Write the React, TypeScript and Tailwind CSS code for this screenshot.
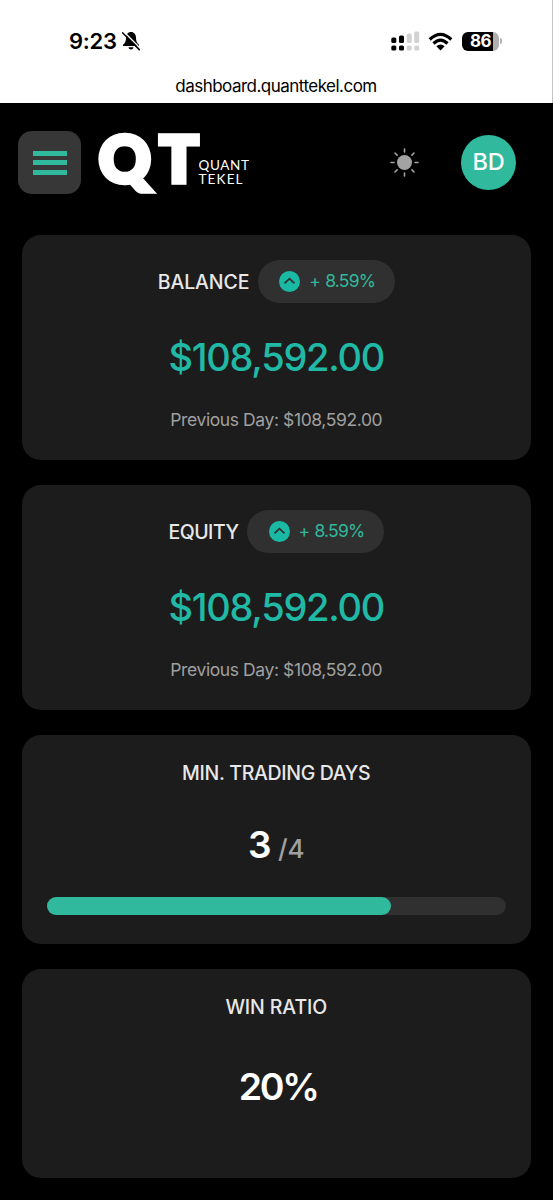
import type { ReactNode } from "react";

function StatusBar() {
  return (
    <div className="h-[103px] border-r border-[#c4c4c4] bg-white text-black">
      <div className="flex h-[74px] items-start justify-between pl-[69px] pr-[50px] pt-[25px]">
        <div className="flex h-8 items-center gap-[4px]">
          <span className="w-[49px] whitespace-nowrap text-[22px] font-semibold leading-8 tracking-[-0.250px]">9:23</span>
          <svg width="18" height="20" viewBox="0 0 18 20">
            <path d="M9 1C5.8 1 4 3.500 4 6.500c0 4-1 5.300-3 7.300V15h16v-1.200c-2-2-3-3.300-3-7.300C14 3.500 12.200 1 9 1ZM6.500 16.300h5c-.3 1.500-1.200 2.200-2.500 2.200s-2.200-.7-2.500-2.200Z" fill="#000" />
            <path d="M1.500.5 18 17" stroke="#fff" strokeWidth="1.500" />
            <path d="M.5 1.800 17.300 18.600" stroke="#000" strokeWidth="1.500" strokeLinecap="round" />
          </svg>
        </div>
        <div className="flex h-8 items-center">
          <svg width="29" height="20" viewBox="0 0 29 20">
            <g fill="#000">
              <rect x="0.300" y="6.500" width="5" height="5.500" rx="1.500" />
              <rect x="8" y="4.500" width="5" height="7.500" rx="1.500" />
              <rect x="0.300" y="14.500" width="5" height="5" rx="1.500" />
              <rect x="8" y="14.500" width="5" height="5" rx="1.500" />
            </g>
            <g fill="#d2d2d2">
              <rect x="15.700" y="2.500" width="5" height="9.500" rx="1.500" />
              <rect x="23.200" y="0.500" width="5" height="11.500" rx="1.500" />
              <rect x="15.700" y="14.500" width="5" height="5" rx="1.500" />
              <rect x="23.200" y="14.500" width="5" height="5" rx="1.500" />
            </g>
          </svg>
          <svg className="ml-2" width="25" height="19" viewBox="0 0 25 19">
            <g fill="none" stroke="#000" strokeWidth="3.200">
              <path d="M1.700 7.500Q12.500-2.800 23.300 7.500" />
              <path d="M5.500 11.500Q12.500 4.800 19.500 11.500" />
            </g>
            <path d="M12.500 18.500 8.300 14.200Q12.500 10.800 16.700 14.200Z" fill="#000" />
          </svg>
          <div className="ml-[9px] flex items-center">
            <div className="flex h-[19px] w-[37px] items-center justify-center overflow-hidden rounded-[6px] bg-[linear-gradient(90deg,#000_31px,#b0b0b0_31px)] text-[17px] font-bold leading-[19px] tracking-[-0.5px] text-white">86</div>
            <div className="ml-px h-[6px] w-[2px] rounded-r-full bg-[#b0b0b0]" />
          </div>
        </div>
      </div>
      <div className="text-center text-[17px] leading-6 tracking-[-0.520px]">dashboard.quanttekel.com</div>
    </div>
  );
}

function Header() {
  return (
    <header className="flex h-[132px] items-start pl-[18px] pr-[37px] pt-[28px]">
      <button aria-label="Menu" className="flex size-[63px] flex-col items-center justify-center gap-[4.500px] rounded-[14px] bg-[#373737]">
        <span className="h-[5px] w-[34px] bg-[#30b99c]" />
        <span className="h-[5px] w-[34px] bg-[#30b99c]" />
        <span className="h-[5px] w-[34px] bg-[#30b99c]" />
      </button>
      <svg className="-mt-5 ml-[13px]" width="165" height="100" viewBox="-2 -20 165 100" fill="#fff">
        <text x="3" y="50.800" fontFamily="Lato" fontWeight="900" fontSize="63.500" textLength="99" stroke="#fff" strokeWidth="5.500">QT</text>
        <g fontFamily="Lato" fontSize="13.500">
          <text x="102.500" y="39" textLength="50.500">QUANT</text>
          <text x="102.500" y="53.300" textLength="44">TEKEL</text>
        </g>
      </svg>
      <div className="ml-auto flex items-center pt-[3.500px]">
        <svg className="mr-[42px]" width="29" height="29" viewBox="-14.500 -14.500 29 29">
          <circle r="7.500" fill="#a3a3a3" />
          <path d="M0-10.500V-13.500M0 10.500V13.500M-10.500 0H-13.500M10.500 0H13.500M-7.400-7.400-9.500-9.500M7.400 7.400 9.500 9.500M-7.400 7.400-9.500 9.500M7.400-7.400 9.500-9.500" stroke="#a3a3a3" strokeWidth="1.600" strokeLinecap="round" />
        </svg>
        <div className="flex size-[55px] items-center justify-center rounded-full bg-[#30b99c] text-[23.500px] font-medium leading-none tracking-[-0.3px] text-white">BD</div>
      </div>
    </header>
  );
}

function Card({ children, className }: { children: ReactNode; className: string }) {
  return <section className={`flex flex-col items-center rounded-[19px] bg-[#1c1c1c] px-[25px] pt-[25px] ${className}`}>{children}</section>;
}

function Title({ children, className }: { children: ReactNode; className: string }) {
  return <h2 className={`whitespace-nowrap text-[19.500px] font-medium leading-[26px] text-[#e8e8e8] ${className}`}>{children}</h2>;
}

function MoneyCard({ title, titleClass }: { title: string; titleClass: string }) {
  return (
    <Card className="h-[225px]">
      <div className="flex items-center gap-[8.500px]">
        <Title className={titleClass}>{title}</Title>
        <div className="flex h-[43px] w-[137px] items-center rounded-full bg-[#303030] pl-[21.500px]">
          <svg width="21" height="21" viewBox="0 0 21 21">
            <circle cx="10.500" cy="10.500" r="10.500" fill="#1ab9a4" />
            <path d="m5.500 12.300 5-4.600 5 4.600" fill="none" stroke="#303030" strokeWidth="1.800" />
          </svg>
          <span className="-mt-px ml-[9px] whitespace-nowrap text-[17.500px] leading-6 tracking-[-0.8px] [word-spacing:1px] text-[#30b99c]">+ 8.59%</span>
        </div>
      </div>
      <div className="mt-[29px] whitespace-nowrap text-[38px] font-medium leading-[50px] tracking-[-1.25px] text-[#20b9a6]">$108,592.00</div>
      <div className="mt-[25px] whitespace-nowrap text-[17.500px] leading-[26px] tracking-[-0.4px] text-[#a0a0a0]">Previous Day: $108,592.00</div>
    </Card>
  );
}

export default function App() {
  return (
    <div className="h-[1200px] w-[553px] overflow-hidden bg-black font-['Inter',sans-serif]">
      <StatusBar />
      <Header />
      <main className="flex flex-col gap-[25px] pl-[22px] pr-[22.500px]">
        <MoneyCard title="BALANCE" titleClass="tracking-[-0.1px]" />
        <MoneyCard title="EQUITY" titleClass="tracking-[-0.5px]" />
        <Card className="h-[209px]">
          <Title className="tracking-[-0.320px]">MIN. TRADING DAYS</Title>
          <div className="mt-[34px] flex h-[50px] items-baseline gap-[8px] leading-[50px]">
            <span className="text-[37px] font-semibold tracking-[-1.5px] text-white">3</span>
            <span className="text-[26px] font-medium text-[#a0a0a0]">/4</span>
          </div>
          <div className="mt-[27px] h-[18px] w-full rounded-full bg-[#303030]">
            <div className="h-full w-3/4 rounded-full bg-[#30b99c]" />
          </div>
        </Card>
        <Card className="h-[209px]">
          <Title className="tracking-[-0.1px]">WIN RATIO</Title>
          <div className="mt-[42px] pl-[4px] text-[37.500px] font-semibold leading-[50px] tracking-[-2.200px] text-white">20%</div>
        </Card>
      </main>
    </div>
  );
}
